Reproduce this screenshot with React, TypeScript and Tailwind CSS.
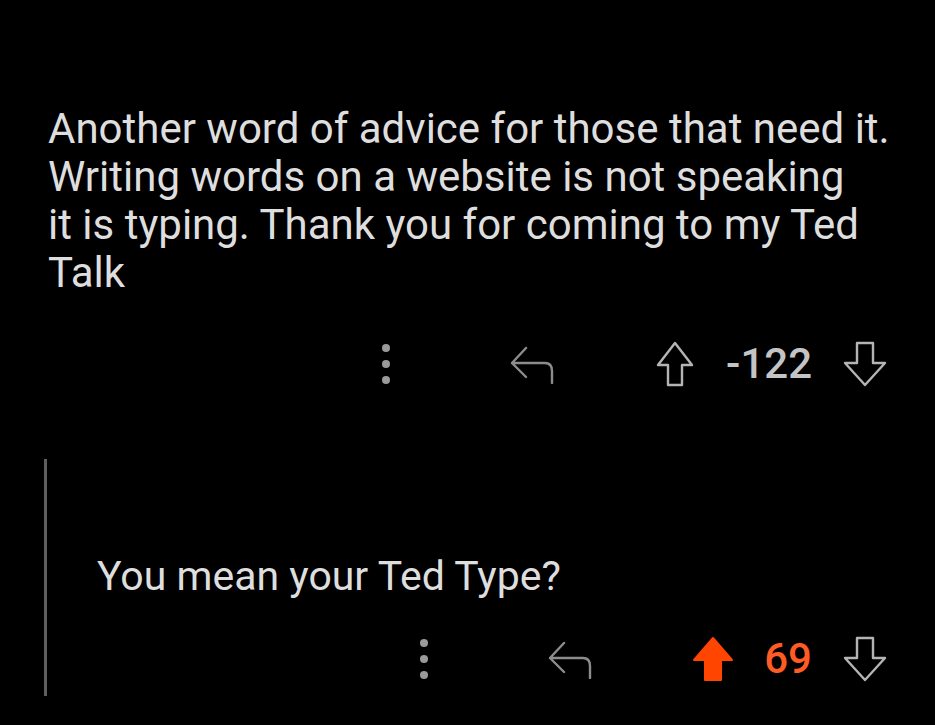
import React from "react";

const UpArrow: React.FC<{ filled?: boolean }> = ({ filled }) => (
  <svg width="42" height="46" viewBox="0 0 42 46" fill="none">
    {filled ? (
      <path
        d="M21 2 L40 24 H29 V44 H13 V24 H2 Z"
        stroke="#ff4500"
        fill="#ff4500"
        strokeWidth="2"
        strokeLinejoin="round"
      />
    ) : (
      <path
        d="M21 2 L38 24 H28 V44 H14 V24 H4 Z"
        stroke="#b4b4b4"
        strokeWidth="2.4"
        strokeLinejoin="round"
      />
    )}
  </svg>
);

const DownArrow: React.FC = () => (
  <svg width="46" height="46" viewBox="0 0 46 46" fill="none">
    <path
      d="M15 2 H31 V22 H43 L23 44 L3 22 H15 Z"
      stroke="#b4b4b4"
      strokeWidth="2.4"
      strokeLinejoin="round"
    />
  </svg>
);

const ReplyIcon: React.FC = () => (
  <svg width="45" height="40" viewBox="0 0 45 40" fill="none">
    <path
      d="M16 4 L2 19 L16 33 M2 19 H35 Q42 19 42 27 V39"
      stroke="#8c8c8c"
      strokeWidth="2.4"
      strokeLinecap="round"
      strokeLinejoin="round"
    />
  </svg>
);

const Dots: React.FC = () => (
  <div className="flex flex-col gap-[8px]">
    <span className="w-[8px] h-[8px] rounded-full bg-[#9a9a9a]" />
    <span className="w-[8px] h-[8px] rounded-full bg-[#9a9a9a]" />
    <span className="w-[8px] h-[8px] rounded-full bg-[#9a9a9a]" />
  </div>
);

const Actions: React.FC<{ score: string; upvoted?: boolean }> = ({ score, upvoted }) => (
  <div className="flex items-center justify-end pr-[47px]">
    <Dots />
    <div className="ml-[120px]">
      <ReplyIcon />
    </div>
    <div className="ml-[99px]">
      <UpArrow filled={upvoted} />
    </div>
    <span
      className={
        upvoted
          ? "ml-[30px] text-[42px] font-medium text-[#ff5b24] leading-none"
          : "ml-[30px] text-[42px] font-medium text-[#c4c4c4] leading-none"
      }
    >
      {score}
    </span>
    <div className="ml-[30px]">
      <DownArrow />
    </div>
  </div>
);

export default function App() {
  return (
    <div className="w-[935px] h-[725px] bg-black overflow-hidden font-['Roboto',sans-serif] text-[#dedede]">
      <div className="pt-[105px] pl-[48px]">
        <p className="text-[42px] leading-[48px] whitespace-nowrap">
          Another word of advice for those that need it.
          <br />
          Writing words on a website is not speaking
          <br />
          it is typing. Thank you for coming to my Ted
          <br />
          Talk
        </p>
      </div>
      <div className="mt-[44px]">
        <Actions score="-122" />
      </div>
      <div className="mt-[72px] ml-[44px] border-l-[3px] border-[#5e5e5e] h-[237px] pt-[93px]">
        <p className="pl-[50px] text-[41px] leading-[48px]">You mean your Ted Type?</p>
        <div className="mt-[36px]">
          <Actions score="69" upvoted />
        </div>
      </div>
    </div>
  );
}
